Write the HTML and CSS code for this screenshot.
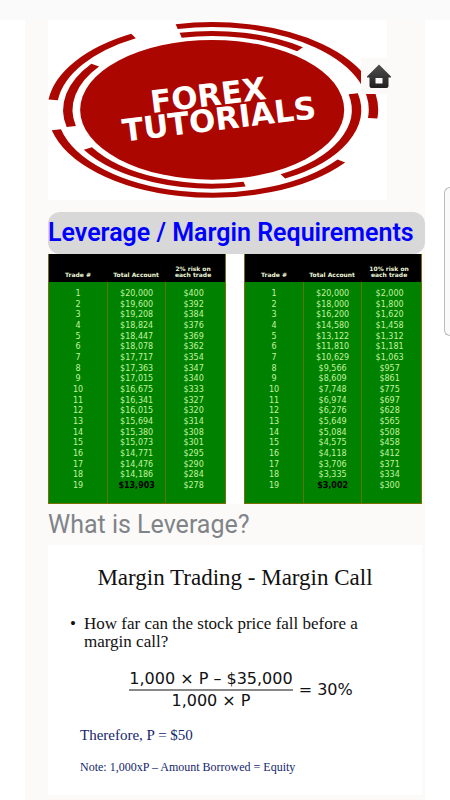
FILE: index.html
```html
<!DOCTYPE html>
<html lang="en">
<head>
    <meta charset="UTF-8">
    <meta name="viewport" content="width=device-width, initial-scale=1.0">
    <title>Forex Tutorials</title>
    <link rel="stylesheet" href="styles.css">
</head>
<body>
    <div class="topbar"></div>
    <main class="content">
        <a class="home" href="#" aria-label="Home">
            <svg width="24" height="25" viewBox="0 0 24 25">
                <defs>
                    <linearGradient id="dark" x1="0" y1="0" x2="0" y2="1">
                        <stop offset="0" stop-color="#505050"/>
                        <stop offset="1" stop-color="#202020"/>
                    </linearGradient>
                </defs>
                <path fill="url(#dark)" fill-rule="evenodd" d="M12 0.500L24 12.500V13.500H21.500V22Q21.500 24 19.500 24H4.500Q2.500 24 2.500 22V13.500H0V12.500ZM8.500 14V19.500H15.500V14Z"/>
            </svg>
        </a>
        <svg class="logo" viewBox="0 0 340 180">
            <g transform="translate(164.5 90) scale(1.89 1)">
                <circle r="70" fill="#ab0700"/>
                <g fill="none" stroke="#ab0700" stroke-width="5">
                    <path d="M-18.800 -83.400A85.500 85.500 0 0 1 85.100 8.500"/>
                    <path d="M-84.300 -10A85 85 0 0 1 -41.700 -74"/>
                    <path d="M-82.600 20A85 85 0 0 0 68.500 51.200"/>
                    <path d="M-16.700 -74.700A76.500 76.500 0 0 1 46.600 -60.700"/>
                    <path d="M-74.700 16.700A76.500 76.500 0 0 1 -62 -44.800"/>
                    <path d="M-65.900 38.800A76.500 76.500 0 0 0 17.200 74.500"/>
                    <path d="M74.800 -16A76.500 76.500 0 0 1 37.500 66.700"/>
                </g>
            </g>
            <g class="logo-text" transform="rotate(-7 164 96)">
                <text x="163" y="86">FOREX</text>
                <text x="171" y="111">TUTORIALS</text>
            </g>
        </svg>

        <h1 class="title">Leverage / Margin Requirements</h1>

        <div class="tables">
            <table>
                <thead>
                    <tr><th>Trade #</th><th>Total Account</th><th>2% risk on<br>each trade</th></tr>
                </thead>
                <tbody>
                    <tr><td>1</td><td>$20,000</td><td>$400</td></tr>
                    <tr><td>2</td><td>$19,600</td><td>$392</td></tr>
                    <tr><td>3</td><td>$19,208</td><td>$384</td></tr>
                    <tr><td>4</td><td>$18,824</td><td>$376</td></tr>
                    <tr><td>5</td><td>$18,447</td><td>$369</td></tr>
                    <tr><td>6</td><td>$18,078</td><td>$362</td></tr>
                    <tr><td>7</td><td>$17,717</td><td>$354</td></tr>
                    <tr><td>8</td><td>$17,363</td><td>$347</td></tr>
                    <tr><td>9</td><td>$17,015</td><td>$340</td></tr>
                    <tr><td>10</td><td>$16,675</td><td>$333</td></tr>
                    <tr><td>11</td><td>$16,341</td><td>$327</td></tr>
                    <tr><td>12</td><td>$16,015</td><td>$320</td></tr>
                    <tr><td>13</td><td>$15,694</td><td>$314</td></tr>
                    <tr><td>14</td><td>$15,380</td><td>$308</td></tr>
                    <tr><td>15</td><td>$15,073</td><td>$301</td></tr>
                    <tr><td>16</td><td>$14,771</td><td>$295</td></tr>
                    <tr><td>17</td><td>$14,476</td><td>$290</td></tr>
                    <tr><td>18</td><td>$14,186</td><td>$284</td></tr>
                    <tr><td>19</td><td class="final">$13,903</td><td>$278</td></tr>
                </tbody>
            </table>
            <table>
                <thead>
                    <tr><th>Trade #</th><th>Total Account</th><th>10% risk on<br>each trade</th></tr>
                </thead>
                <tbody>
                    <tr><td>1</td><td>$20,000</td><td>$2,000</td></tr>
                    <tr><td>2</td><td>$18,000</td><td>$1,800</td></tr>
                    <tr><td>3</td><td>$16,200</td><td>$1,620</td></tr>
                    <tr><td>4</td><td>$14,580</td><td>$1,458</td></tr>
                    <tr><td>5</td><td>$13,122</td><td>$1,312</td></tr>
                    <tr><td>6</td><td>$11,810</td><td>$1,181</td></tr>
                    <tr><td>7</td><td>$10,629</td><td>$1,063</td></tr>
                    <tr><td>8</td><td>$9,566</td><td>$957</td></tr>
                    <tr><td>9</td><td>$8,609</td><td>$861</td></tr>
                    <tr><td>10</td><td>$7,748</td><td>$775</td></tr>
                    <tr><td>11</td><td>$6,974</td><td>$697</td></tr>
                    <tr><td>12</td><td>$6,276</td><td>$628</td></tr>
                    <tr><td>13</td><td>$5,649</td><td>$565</td></tr>
                    <tr><td>14</td><td>$5,084</td><td>$508</td></tr>
                    <tr><td>15</td><td>$4,575</td><td>$458</td></tr>
                    <tr><td>16</td><td>$4,118</td><td>$412</td></tr>
                    <tr><td>17</td><td>$3,706</td><td>$371</td></tr>
                    <tr><td>18</td><td>$3,335</td><td>$334</td></tr>
                    <tr><td>19</td><td class="final">$3,002</td><td>$300</td></tr>
                </tbody>
            </table>
        </div>

        <h2 class="question">What is Leverage?</h2>

        <section class="slide">
            <h3>Margin Trading - Margin Call</h3>
            <ul>
                <li>How far can the stock price fall before a margin call?</li>
            </ul>
            <div class="formula">
                <div class="fraction">
                    <div class="top">1,000 × P – $35,000</div>
                    <div>1,000 × P</div>
                </div>
                <div>= 30%</div>
            </div>
            <p class="answer">Therefore, P = $50</p>
            <p class="note">Note: 1,000xP – Amount Borrowed = Equity</p>
        </section>
    </main>
    <div class="side-panel"></div>
</body>
</html>
```

FILE: styles.css
```css
* {
    box-sizing: border-box;
}
body {
    margin: 0;
    min-height: 100vh;
    position: relative;
    display: flex;
    flex-direction: column;
    background: #fff;
    font-family: Roboto, sans-serif;
}
.topbar {
    height: 20px;
    background: #fafafa;
}
.content {
    position: relative;
    flex: 1;
    margin: 0 25px;
    padding-left: 23px;
    background: #fbfaf8;
}
.logo {
    display: block;
    width: 90%;
    background: #fff;
}
.logo-text {
    font-family: "DejaVu Sans", sans-serif;
    font-size: 31px;
    font-weight: bold;
    fill: #fff;
    text-anchor: middle;
}
/* sits over the corner of the logo */
.home {
    position: absolute;
    top: 38px;
    right: 28px;
    width: 36px;
    height: 36px;
    display: flex;
    align-items: center;
    justify-content: center;
    background: #fbfaf8;
}
.title {
    margin: 12px 0 0;
    background: #d8d8d8;
    border-radius: 12px;
    color: #0000ff;
    font-size: 25px;
    font-weight: 600;
    line-height: 42px;
    white-space: nowrap;
}
.tables {
    display: flex;
    gap: 18px;
    margin-right: 3px;
    background: #fff;
}
table {
    flex: 1;
    width: 0;
    table-layout: fixed;
    border-collapse: separate;
    border-spacing: 0;
    border: 1px solid #7a7000;
    border-top: 0;
    background: #008200;
    font-family: "DejaVu Sans", sans-serif;
    text-align: center;
}
th {
    width: 33%;
    height: 28px;
    padding: 0 0 4px;
    background: #000;
    color: #eaf5d8;
    font-size: 6px;
    line-height: 6px;
    vertical-align: bottom;
    white-space: nowrap;
}
th:last-child {
    width: auto;
}
td {
    padding: 0;
    color: #c4f2a0;
    font-size: 8px;
    line-height: 11px;
}
th:last-child, td:last-child {
    padding-right: 4px;
}
td + td {
    border-left: 1px solid #5c7800;
}
tr:nth-child(3n) td {
    line-height: 10px;
}
tbody tr:first-child td {
    padding-top: 6px;
}
tbody tr:last-child td {
    padding-bottom: 12px;
}
td.final {
    color: #000;
    font-weight: bold;
}
.question {
    margin: 0;
    color: #808488;
    font-size: 25px;
    font-weight: normal;
    line-height: 41px;
}
.slide {
    height: 250px;
    margin-right: 3px;
    padding: 18px 32px 0;
    background: #fff;
    color: #111;
    font-family: "Liberation Serif", serif;
}
.slide h3 {
    margin: 0 0 22px;
    font-size: 23px;
    font-weight: normal;
    line-height: 30px;
    text-align: center;
    white-space: nowrap;
}
.slide ul {
    margin: 0 0 18px;
    padding-left: 4px;
    font-size: 17px;
    line-height: 18px;
    list-style: none;
}
.slide li {
    position: relative;
}
.slide li::before {
    content: "•";
    position: absolute;
    left: -14px;
}
.formula {
    display: flex;
    align-items: center;
    justify-content: center;
    gap: 6px;
    padding-left: 12px;
    font-family: "DejaVu Sans", sans-serif;
    font-size: 16px;
    line-height: 20px;
    white-space: nowrap;
}
.fraction {
    text-align: center;
}
.fraction .top {
    border-bottom: 2px solid #888;
}
.slide p {
    margin: 0;
    color: #14266c;
}
.slide .answer {
    margin: 15px 0;
    font-size: 15px;
    line-height: 18px;
}
.slide .note {
    font-size: 12px;
    line-height: 16px;
}
/* edge of the panel that slides in from the right */
.side-panel {
    position: absolute;
    top: 187px;
    right: 0;
    width: 6px;
    height: 149px;
    border: 1px solid #bbb;
    border-right: 0;
    border-radius: 8px 0 0 8px;
    background: #fafafa;
}
```
